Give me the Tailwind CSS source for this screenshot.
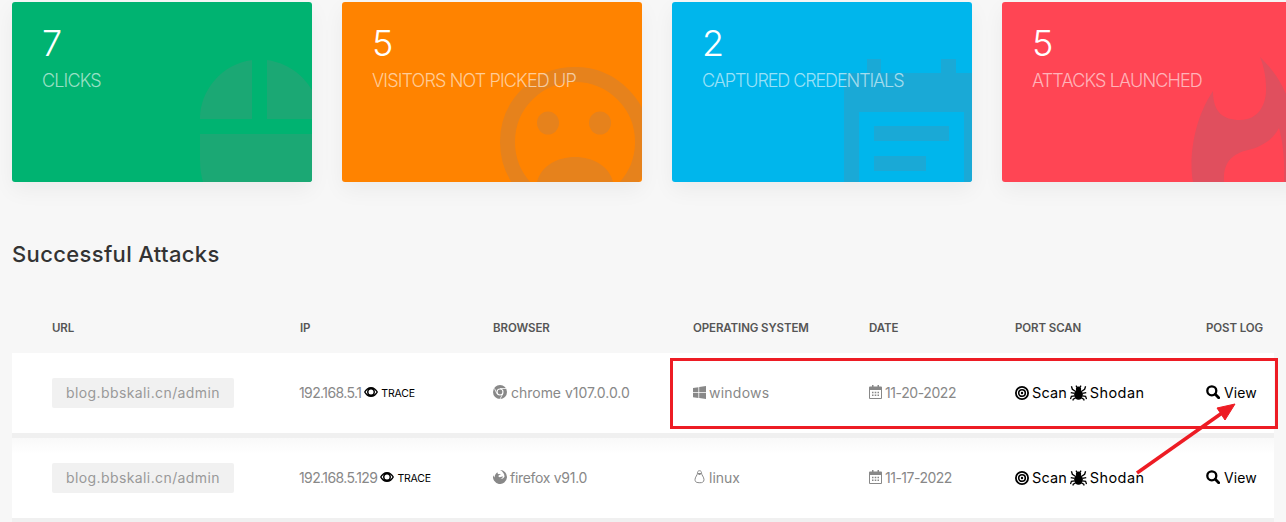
<!doctype html>
<html><head><meta charset="utf-8"><script src="https://cdn.jsdelivr.net/npm/@tailwindcss/browser@4"></script></head>
<body class="bg-[#f7f7f7] font-['Inter',sans-serif]">
<svg class="hidden"><defs>
<symbol id="eye" viewBox="0 0 14 10"><path fill="#000" fill-rule="evenodd" d="M7 0c3 0 5.500 2 7 5-1.500 3-4 5-7 5S1.500 8 0 5c1.500-3 4-5 7-5zM1.500 5C2.300 6.200 3.200 7 4.200 7.800 3.400 7 3 6 3 5s.4-2 1.200-2.800C3.200 3 2.300 3.800 1.500 5zm8.300-2.800C10.600 3 11 4 11 5s-.4 2-1.200 2.800c1-.8 1.900-1.600 2.700-2.800-.8-1.200-1.700-2-2.700-2.800zM7 2.500a2.500 2.500 0 110 5 2.500 2.500 0 010-5z"/></symbol>
<symbol id="cal" viewBox="0 0 13 14"><path fill="#888" fill-rule="evenodd" d="M3 0h1.500v1.500h4V0H10v1.500h2a1 1 0 011 1V13a1 1 0 01-1 1H1a1 1 0 01-1-1V2.500a1 1 0 011-1h2zM1 5v8h11V5zm2 1.800h1.500v1.500H3zm2.700 0h1.600v1.500H5.700zm2.800 0H10v1.500H8.500zM3 9.500h1.500V11H3zm2.700 0h1.600V11H5.700zm2.800 0H10V11H8.500z"/></symbol>
<symbol id="target" viewBox="0 0 14 14"><circle cx="7" cy="7" r="6.100" fill="none" stroke="#000" stroke-width="1.800"/><circle cx="7" cy="7" r="3.300" fill="none" stroke="#000" stroke-width="1.600"/><circle cx="7" cy="7" r="1.200" fill="#000"/></symbol>
<symbol id="bug" viewBox="0 0 18 16"><ellipse cx="9" cy="9.700" rx="4.600" ry="5.500" fill="#000"/><circle cx="9" cy="3.800" r="2.800" fill="#000"/><path fill="none" stroke="#000" stroke-width="1.400" d="M6 6.500 2.500 4 1.500 .8M12 6.500l3.500-2.500 1-3.200M5 8.500 .8 7.500M13 8.500l4.200-1M5 11 1.500 11.500 .5 14.500M13 11l3.500.5 1 3M6 13l-2.500 1.500L3 16M12 13l2.500 1.500.5 1.500M7.500 2 6.300 .3M10.500 2l1.200-1.700"/></symbol>
<symbol id="search" viewBox="0 0 14 14"><circle cx="5.800" cy="5.800" r="4.500" fill="none" stroke="#000" stroke-width="2.300"/><path d="M9.300 9.300l3.400 3.400" stroke="#000" stroke-width="2.800" stroke-linecap="round"/></symbol>
</defs></svg>

<div class="relative h-[522px] w-[1286px] overflow-hidden">
<main class="px-3 pt-[2px]">
  <section class="flex gap-[30px]">
    <div class="relative h-[180px] w-[300px] shrink-0 overflow-hidden rounded-[3px] bg-[#00b371] px-[30px] pt-[20px] text-white shadow-[0_8px_22px_rgba(0,0,0,0.05)]">
      <svg class="absolute left-[188px] top-[58px]" width="120" height="122" viewBox="0 0 120 122" fill="#1ba874"><path d="M52 59H0C0 30 22 4 52 0zM67 59h53C120 30 97 4 67 0zM0 74h120v48H3C1 115 0 108 0 100z"/></svg>
      <p class="relative text-[36px] leading-[42px] font-light">7</p>
      <p class="relative mt-[5px] text-[18px] leading-[24px] font-light tracking-[-0.85px] text-white/60">CLICKS</p>
    </div>
    <div class="relative h-[180px] w-[300px] shrink-0 overflow-hidden rounded-[3px] bg-[#ff8300] px-[30px] pt-[20px] text-white shadow-[0_8px_22px_rgba(0,0,0,0.05)]">
      <svg class="absolute left-[158px] top-[65px]" width="150" height="115" viewBox="0 0 150 115" fill="#e6821c"><circle cx="75" cy="75" r="67.500" fill="none" stroke="#e6821c" stroke-width="15"/><path d="M37 115C41 99 57 90 75 90 93 90 109 99 113 115z"/><ellipse cx="48" cy="56" rx="11" ry="11.500"/><ellipse cx="100" cy="56" rx="11" ry="11.500"/></svg>
      <p class="relative text-[36px] leading-[42px] font-light">5</p>
      <p class="relative mt-[5px] text-[18px] leading-[24px] font-light tracking-[-0.85px] whitespace-nowrap text-white/60">VISITORS NOT PICKED UP</p>
    </div>
    <div class="relative h-[180px] w-[300px] shrink-0 overflow-hidden rounded-[3px] bg-[#00b6ec] px-[30px] pt-[20px] text-white shadow-[0_8px_22px_rgba(0,0,0,0.05)]">
      <svg class="absolute left-[172px] top-[57px]" width="128" height="123" viewBox="0 0 128 123" fill="#1aa9d6"><path fill-rule="evenodd" d="M23 0h14v14h60V0h15v14h16v109H0V14h23zM15 53v70h105V53z"/><path d="M30 67h75v15H30zM30 97h52v15H30z"/></svg>
      <p class="relative text-[36px] leading-[42px] font-light">2</p>
      <p class="relative mt-[5px] text-[18px] leading-[24px] font-light tracking-[-1.1px] whitespace-nowrap text-white/60">CAPTURED CREDENTIALS</p>
    </div>
    <div class="relative h-[180px] w-[300px] shrink-0 overflow-hidden rounded-[3px] bg-[#ff4554] px-[30px] pt-[20px] text-white shadow-[0_8px_22px_rgba(0,0,0,0.05)]">
      <svg class="absolute left-[188px] top-[55px] overflow-visible" width="110" height="125" viewBox="0 0 110 125" fill="#e04f5e"><path d="M70 0C85 15 110 40 110 125H94C95 105 93 85 89 71 82 84 70 90 58 93 42 97 33 105 34 125H3C-1 105 2 65 23 34 23 55 33 63 50 63 68 63 76 48 76 33 76 20 74 10 70 0z"/></svg>
      <p class="relative text-[36px] leading-[42px] font-light">5</p>
      <p class="relative mt-[5px] text-[18px] leading-[24px] font-light tracking-[-0.85px] whitespace-nowrap text-white/60">ATTACKS LAUNCHED</p>
    </div>
  </section>

  <h2 class="mt-[60px] text-[22px] leading-6 font-medium tracking-[0.35px] text-[#333]">Successful Attacks</h2>

  <div class="mt-[54px] mb-[17px] grid grid-cols-[247px_194px_200px_176px_146px_191px_1fr] pl-10 text-[11.500px] leading-4 font-semibold tracking-[-0.1px] text-[#555]">
    <span>URL</span><span class="pl-[1px]">IP</span><span>BROWSER</span><span>OPERATING SYSTEM</span><span>DATE</span><span>PORT SCAN</span><span>POST LOG</span>
  </div>

  <div class="flex flex-col gap-[5px] bg-[#f0f0f0] pb-[5px] text-[14px] text-[#888]">
    <div class="grid h-20 grid-cols-[247px_194px_200px_176px_146px_191px_1fr] items-center bg-white pl-10">
      <span class="flex h-[30px] w-[182px] items-center rounded-[2px] bg-[#f1f1f1] pb-[2px] pl-[14px] tracking-[0.4px] text-[#999]">blog.bbskali.cn/admin</span>
      <span class="flex items-center gap-[3px] pb-[2px]"><span class="tracking-[-0.6px]">192.168.5.1</span><svg class="h-[10px] w-[14px]"><use href="#eye"/></svg><span class="mt-[3px] text-[10.500px] tracking-[-0.15px] text-black">TRACE</span></span>
      <span class="flex items-center gap-[4px] pb-[2px]"><svg class="h-[14px] w-[14px]" viewBox="0 0 14 14"><circle cx="7" cy="7" r="7" fill="#888"/><circle cx="7" cy="7" r="3.500" fill="#fff"/><circle cx="7" cy="7" r="2.400" fill="#888"/><path d="M7 3.500h6M3.900 8.700 1.500 3.500M9.800 8.800 7 14" stroke="#fff" stroke-width=".8"/></svg><span class="tracking-[-0.02px]">chrome v107.0.0.0</span></span>
      <span class="flex items-center gap-[3px] pb-[2px]"><svg class="h-[13px] w-[13px]" viewBox="0 0 13 13" fill="#888"><path d="M0 2l5.400-.8v5H0zM6.200 1.100 13 0v6.200H6.200zM0 7h5.400v5L0 11.200zM6.200 7H13v6l-6.800-1z"/></svg><span class="tracking-[0.25px]">windows</span></span>
      <span class="flex items-center gap-[3px] pb-[2px]"><svg class="h-[14px] w-[13px]"><use href="#cal"/></svg><span class="tracking-[-0.4px]">11-20-2022</span></span>
      <span class="flex items-center gap-[3px] pb-[1px] text-[14.500px] tracking-[0.1px] text-black"><svg class="h-[14px] w-[14px]"><use href="#target"/></svg>Scan<svg class="h-[16px] w-[17px]"><use href="#bug"/></svg><span class="tracking-[0.4px]">Shodan</span></span>
      <span class="flex items-center gap-[4px] pb-[2px] tracking-[0.1px] text-black"><svg class="h-[14px] w-[14px]"><use href="#search"/></svg>View</span>
    </div>
    <div class="grid h-20 grid-cols-[247px_194px_200px_176px_146px_191px_1fr] items-center bg-linear-to-b from-[#f9f9f9] to-white to-[20%] pl-10">
      <span class="flex h-[30px] w-[182px] items-center rounded-[2px] bg-[#f1f1f1] pb-[2px] pl-[14px] tracking-[0.4px] text-[#999]">blog.bbskali.cn/admin</span>
      <span class="flex items-center gap-[3px] pb-[2px]"><span class="tracking-[-0.6px]">192.168.5.129</span><svg class="h-[10px] w-[14px]"><use href="#eye"/></svg><span class="mt-[3px] text-[10.500px] tracking-[-0.15px] text-black">TRACE</span></span>
      <span class="flex items-center gap-[3px] pb-[2px]"><svg class="h-[14px] w-[14px]" viewBox="0 0 14 14"><path fill="#888" d="M7 0a7 7 0 11-6.800 5.300c.3 1 .8 1.700 1.300 2.200C1.700 5 3 3 4.700 2.200 4.500 3 4.700 3.700 5 4.200 6 3.800 7 4 8 4.600 7.200 5 6 5 5.500 5.700c-.3.700.3 1.500 1.200 1.500 1.300 0 2.300-.7 3.300-.7-.3 1-1.300 2-2.800 2.200 1.800.5 3.500-.5 4.300-2C11.500 4 10 1.500 7 0z"/></svg><span class="tracking-[-0.3px]">firefox v91.0</span></span>
      <span class="flex items-center gap-[3px] pb-[2px]"><svg class="h-[14px] w-[13px]" viewBox="0 0 13 14" fill="none" stroke="#888" stroke-width="1"><path d="M6.500.7c1.600 0 2 1.200 2 2.500 0 1.600 2.500 4 2.500 6.500 0 1.300-.6 2-1.300 2.500-1 .7-4.500.7-6.400 0C3 12.200 2 11 2 9.700 2 7.200 4.500 4.800 4.500 3.200c0-1.300.4-2.500 2-2.500z"/><path d="M5 3.500h3L6.500 5z" fill="#888"/></svg>linux</span>
      <span class="flex items-center gap-[3px] pb-[2px]"><svg class="h-[14px] w-[13px]"><use href="#cal"/></svg><span class="tracking-[-0.5px]">11-17-2022</span></span>
      <span class="flex items-center gap-[3px] pb-[1px] text-[14.500px] tracking-[0.1px] text-black"><svg class="h-[14px] w-[14px]"><use href="#target"/></svg>Scan<svg class="h-[16px] w-[17px]"><use href="#bug"/></svg><span class="tracking-[0.4px]">Shodan</span></span>
      <span class="flex items-center gap-[4px] pb-[2px] tracking-[0.1px] text-black"><svg class="h-[14px] w-[14px]"><use href="#search"/></svg>View</span>
    </div>
  </div>
</main>
<div class="absolute left-[670px] top-[358px] h-[71px] w-[608px] border-[3px] border-[#ed1c24]"></div>
<svg class="absolute left-[1130px] top-[398px]" width="112" height="80" viewBox="1130 398 112 80"><path d="M1137 473 1222 413" stroke="#ed1c24" stroke-width="3.500"/><path d="M1235 404 1217 408 1225 420z" fill="#ed1c24" stroke="#ed1c24"/></svg>
</div>
</body></html>
